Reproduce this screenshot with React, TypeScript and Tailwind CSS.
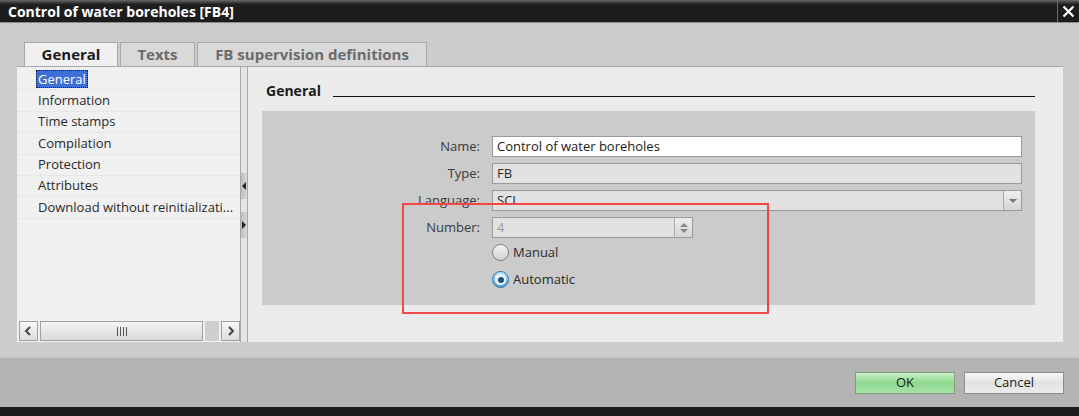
import React from "react";

const font = "font-['Open_Sans',_'Noto_Sans',_sans-serif]";

const navItems = [
  "General",
  "Information",
  "Time stamps",
  "Compilation",
  "Protection",
  "Attributes",
  "Download without reinitializati...",
];

const Tab = (props: { label: string; active?: boolean; width: string }) => (
  <div
    className={`flex h-[24px] items-center justify-center border border-b-0 border-[#a8a8a8] pb-[1px] text-[15px] font-bold ${props.width} ${
      props.active
        ? "bg-[#f0f0f0] text-[#1a1a1a]"
        : "bg-[#d9d9d9] text-[#6b6b6b]"
    }`}
  >
    {props.label}
  </div>
);

const FieldRow = (props: { label: string; children: React.ReactNode }) => (
  <div className="flex h-[21px] items-center">
    <div className="w-[219px] pr-[1px] text-right text-[13px] text-[#3a3a3a]">
      {props.label}
    </div>
    <div className="ml-[11px] flex h-full">{props.children}</div>
  </div>
);

const Radio = (props: { label: string; checked?: boolean }) => (
  <div className="flex h-[17px] items-center">
    <div className="w-[230px]" />
    {props.checked ? (
      <div className="flex size-[17px] items-center justify-center rounded-full border border-[#2f6f9f] bg-gradient-to-b from-[#bfe6ff] to-[#4aa6e0]">
        <div className="flex size-[11px] items-center justify-center rounded-full bg-[#eaf6ff]">
          <div className="size-[6px] rounded-full bg-[#1d4f86]" />
        </div>
      </div>
    ) : (
      <div className="size-[17px] rounded-full border border-[#7a7a7a] bg-gradient-to-b from-[#f4f4f4] to-[#d0d0d0]" />
    )}
    <span className="ml-[4px] text-[13px] text-[#2a2a2a]">{props.label}</span>
  </div>
);

const ScrollBtn = (props: { dir: "left" | "right" }) => (
  <div className="flex h-[20px] w-[19px] items-center justify-center border border-[#a0a0a0] bg-gradient-to-b from-[#f8f8f8] to-[#dcdcdc]">
    <svg width="8" height="10" viewBox="0 0 8 10">
      <path
        d={props.dir === "left" ? "M6 1 L2 5 L6 9" : "M2 1 L6 5 L2 9"}
        stroke="#444"
        strokeWidth="2"
        fill="none"
      />
    </svg>
  </div>
);

export default function App() {
  return (
    <div
      className={`${font} relative flex h-[416px] w-[1079px] flex-col overflow-hidden bg-[#cccccc]`}
    >
      {/* title bar */}
      <div className="flex h-[23px] items-stretch border-b border-[#8a8a8a] bg-gradient-to-b from-[#6a6a6a] via-[#1f1f1f] via-20% to-[#1b1b1b]">
        <div className="flex flex-1 items-center pl-[8px] text-[14px] font-bold text-white">
          Control of water boreholes [FB4]
        </div>
        <div className="flex w-[22px] items-center justify-center border-l border-[#6a6a6a]">
          <svg width="13" height="13" viewBox="0 0 13 13">
            <path d="M1.5 1.5 L11.5 11.5 M11.5 1.5 L1.5 11.5" stroke="#fff" strokeWidth="2.2" />
          </svg>
        </div>
      </div>

      {/* body */}
      <div className="flex flex-col pl-[17px] pr-[16px] pt-[19px]">
        <div className="flex gap-[2px] pl-[7px]">
          <Tab label="General" active width="w-[94px]" />
          <Tab label="Texts" width="w-[75px]" />
          <Tab label="FB supervision definitions" width="w-[230px]" />
        </div>

        <div className="flex h-[276px] border-t border-[#a8a8a8]">
          {/* navigation */}
          <div className="flex w-[223px] flex-col bg-[#f0f0f0]">
            <div className="flex flex-1 flex-col pt-[2px]">
              {navItems.map((item, i) => (
                <div
                  key={item}
                  className="flex h-[21.4px] items-center border-b border-[#e6e6e6] pl-[21px] text-[13px] text-[#2a2a2a]"
                >
                  {i === 0 ? (
                    <span className="-ml-[2px] border border-dotted border-[#1a1a1a] bg-[#3d6fd9] px-[1px] leading-[16px] text-white">
                      {item}
                    </span>
                  ) : (
                    item
                  )}
                </div>
              ))}
            </div>
            <div className="flex items-center gap-[2px] pb-[1px] pl-[2px]">
              <ScrollBtn dir="left" />
              <div className="flex h-[20px] w-[164px] items-center justify-center border border-[#a0a0a0] bg-gradient-to-b from-[#f4f4f4] to-[#dadada]">
                <div className="flex gap-[2px]">
                  <div className="h-[9px] w-px bg-[#555]" />
                  <div className="h-[9px] w-px bg-[#555]" />
                  <div className="h-[9px] w-px bg-[#555]" />
                  <div className="h-[9px] w-px bg-[#555]" />
                </div>
              </div>
              <div className="h-[20px] w-[14px] bg-[#cfcfcf]" />
              <ScrollBtn dir="right" />
            </div>
          </div>

          {/* splitter */}
          <div className="flex w-[8px] flex-col border-x border-[#a8a8a8] bg-[#e4e4e4]">
            <div className="h-[106px]" />
            <div className="flex h-[26px] items-center justify-center bg-gradient-to-r from-[#bdbdbd] to-[#d8d8d8]">
              <div className="h-0 w-0 border-y-[4px] border-r-[4px] border-y-transparent border-r-[#222]" />
            </div>
            <div className="h-[13px]" />
            <div className="flex h-[26px] items-center justify-center bg-gradient-to-r from-[#bdbdbd] to-[#d8d8d8]">
              <div className="h-0 w-0 border-y-[4px] border-l-[4px] border-y-transparent border-l-[#222]" />
            </div>
          </div>

          {/* content */}
          <div className="flex flex-1 flex-col bg-[#ebebeb] pl-[14px] pr-[28px]">
            <div className="mt-[16px] flex items-end">
              <span className="ml-[4px] text-[14px] font-bold leading-[16px] text-[#1a1a1a]">
                General
              </span>
              <div className="mb-[2px] ml-[12px] h-[1.5px] flex-1 bg-[#111]" />
            </div>
            <div className="mt-[12px] flex h-[194px] flex-col gap-[6px] bg-[#cbcbcb] pt-[25px]">
              <FieldRow label="Name:">
                <div className="flex w-[530px] items-center border border-[#9a9a9a] bg-white pl-[4px] text-[13px] text-[#1a1a1a]">
                  Control of water boreholes
                </div>
              </FieldRow>
              <FieldRow label="Type:">
                <div className="flex w-[530px] items-center border border-[#9a9a9a] bg-[#e2e2e2] pl-[4px] text-[13px] text-[#2a2a2a]">
                  FB
                </div>
              </FieldRow>
              <FieldRow label="Language:">
                <div className="flex w-[530px] border border-[#9a9a9a] bg-[#e2e2e2]">
                  <div className="flex flex-1 items-center pl-[4px] text-[13px] text-[#2a2a2a]">
                    SCL
                  </div>
                  <div className="flex w-[18px] items-center justify-center border-l border-[#a8a8a8] bg-gradient-to-b from-[#eeeeee] to-[#d6d6d6]">
                    <div className="h-0 w-0 border-x-[4px] border-t-[4px] border-x-transparent border-t-[#777]" />
                  </div>
                </div>
              </FieldRow>
              <FieldRow label="Number:">
                <div className="flex w-[201px] border border-[#9a9a9a] bg-[#e2e2e2]">
                  <div className="flex flex-1 items-center pl-[4px] text-[13px] text-[#9a9a9a]">
                    4
                  </div>
                  <div className="flex w-[18px] flex-col items-center justify-center gap-[2px] border-l border-[#a8a8a8] bg-gradient-to-b from-[#eeeeee] to-[#d6d6d6]">
                    <div className="h-0 w-0 border-x-[4px] border-b-[4px] border-x-transparent border-b-[#888]" />
                    <div className="h-0 w-0 border-x-[4px] border-t-[4px] border-x-transparent border-t-[#888]" />
                  </div>
                </div>
              </FieldRow>
              <div className="flex flex-col gap-[10px]">
                <Radio label="Manual" />
                <Radio label="Automatic" checked />
              </div>
            </div>
          </div>
        </div>
      </div>

      {/* footer */}
      <div className="mt-[15px] flex h-[50px] items-start justify-end gap-[9px] border-t border-[#c2c2c2] bg-[#b3b3b3] pr-[15px] pt-[14px]">
        <div className="flex h-[22px] w-[100px] items-center justify-center border border-[#7f9f7f] bg-gradient-to-b from-[#c8efc8] via-[#8fd98f] to-[#a8e2a8] text-[13px] text-[#1a1a1a]">
          OK
        </div>
        <div className="flex h-[22px] w-[100px] items-center justify-center border border-[#8a8a8a] bg-gradient-to-b from-[#fafafa] via-[#e2e2e2] to-[#ececec] text-[13px] text-[#1a1a1a]">
          Cancel
        </div>
      </div>
      <div className="flex-1 bg-[#1c1c1c]" />

      {/* red highlight annotation */}
      <div className="absolute left-[402px] top-[203px] h-[111px] w-[367px] border-[2.5px] border-[#f04848]" />
    </div>
  );
}
